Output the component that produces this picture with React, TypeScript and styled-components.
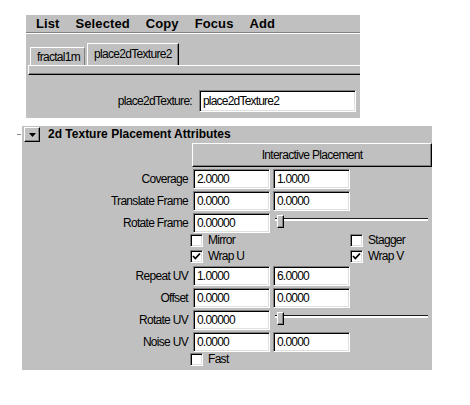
import React from 'react';
import styled, { createGlobalStyle } from 'styled-components';

const Global = createGlobalStyle`
  html, body { margin: 0; padding: 0; background: #ffffff; }
  body {
    font-family: "Liberation Sans", Arial, sans-serif;
    font-size: 12px;
    letter-spacing: -0.7px;
    color: #000;
  }
  * { box-sizing: border-box; }
`;

const Page = styled.div`
  width: 470px;
  height: 405px;
  padding: 15px 0 0 22px;
  display: flex;
  flex-direction: column;
  align-items: flex-start;
`;

const TopPanel = styled.div`
  margin-left: 4px;
  width: 334px;
  height: 103px;
  background: #c0c0c0;
  display: flex;
  flex-direction: column;
`;

const MenuBar = styled.div`
  height: 17px;
  display: flex;
  align-items: center;
  gap: 16px;
  padding-left: 10px;
  font-weight: bold;
  font-size: 13px;
  letter-spacing: 0.1px;
`;

const MenuItem = styled.span`
  line-height: 17px;
`;

const Separator = styled.div`
  height: 2px;
  border-top: 1px solid #808080;
  border-bottom: 1px solid #ffffff;
`;

const TabStrip = styled.div`
  height: 31px;
  display: flex;
  align-items: flex-end;
  padding-left: 4px;
`;

const Tab = styled.div<{ $active?: boolean }>`
  height: ${p => (p.$active ? 22 : 18)}px;
  margin-left: ${p => (p.$active ? 2 : 0)}px;
  padding: ${p => (p.$active ? '3px 6px 0 6px' : '2px 4px 0 6px')};
  border-top: 1px solid #ffffff;
  border-left: 1px solid #ffffff;
  border-right: 1px solid ${p => (p.$active ? '#000' : '#808080')};
  box-shadow: ${p => (p.$active ? 'inset -1px 0 0 #808080' : 'none')};
  line-height: 14px;
  white-space: nowrap;
`;

const TabFrame = styled.div`
  height: 10px;
  margin-left: 2px;
  border-top: 1px solid #ffffff;
  border-left: 1px solid #ffffff;
  border-bottom: 1px solid #000000;
  box-shadow: inset 0 -1px 0 #808080;
`;

const TabContent = styled.div`
  flex: 1;
  display: flex;
  justify-content: flex-end;
  align-items: flex-start;
  padding: 15px 4px 0 0;
  gap: 7px;
`;

const FieldLabel = styled.span`
  line-height: 22px;
  white-space: nowrap;
`;

const Field = styled.div<{ $w?: number; $h?: number }>`
  width: ${p => p.$w ?? 77}px;
  height: ${p => p.$h ?? 20}px;
  background: #ffffff;
  border-top: 1px solid #808080;
  border-left: 1px solid #808080;
  border-bottom: 1px solid #ffffff;
  border-right: 1px solid #ffffff;
  box-shadow: inset 1px 1px 0 #000000, inset -1px -1px 0 #dfdfdf;
  padding-left: 3px;
  letter-spacing: -0.8px;
  line-height: ${p => (p.$h ?? 20) - 2}px;
  white-space: nowrap;
  overflow: hidden;
`;

const AttrPanel = styled.div`
  margin-top: 8px;
  width: 410px;
  height: 244px;
  background: #c0c0c0;
  display: flex;
  flex-direction: column;
`;

const Header = styled.div`
  height: 17px;
  display: flex;
  align-items: center;
`;

const CollapseButton = styled.div`
  position: relative;
  margin-left: 2px;
  width: 16px;
  height: 15px;
  background: #c0c0c0;
  border-top: 1px solid #ffffff;
  border-left: 1px solid #ffffff;
  border-right: 1px solid #000000;
  border-bottom: 1px solid #000000;
  box-shadow: inset -1px -1px 0 #808080;
  display: flex;
  align-items: center;
  justify-content: center;
  &::before {
    content: '';
    position: absolute;
    left: -8px;
    top: 6px;
    width: 4px;
    height: 1px;
    background: #8a8a8a;
  }
`;

const HeaderTitle = styled.span`
  margin-left: 8px;
  font-weight: bold;
  font-size: 12px;
  letter-spacing: 0;
  line-height: 17px;
  white-space: nowrap;
`;

const Row = styled.div<{ $top?: number }>`
  display: flex;
  align-items: center;
  height: 20px;
  margin-top: ${p => p.$top ?? 2}px;
`;

const ButtonRow = styled.div`
  display: flex;
  height: 24px;
  padding-left: 170px;
`;

const PushButton = styled.div`
  flex: 1;
  background: #c0c0c0;
  border-top: 1px solid #ffffff;
  border-left: 1px solid #ffffff;
  border-right: 1px solid #000000;
  border-bottom: 1px solid #000000;
  box-shadow: inset -1px -1px 0 #808080;
  display: flex;
  align-items: center;
  justify-content: center;
  white-space: nowrap;
`;

const Label = styled.span`
  width: 166px;
  margin-right: 5px;
  text-align: right;
  line-height: 20px;
  white-space: nowrap;
`;

const Pair = styled.div`
  display: flex;
  gap: 3px;
`;

const Slider = styled.div`
  flex: 1;
  align-self: stretch;
  margin: 0 4px 0 5px;
  padding-top: 5px;
`;

const Track = styled.div`
  position: relative;
  height: 3px;
  border-top: 1px solid #1a1a1a;
  background: #ffffff;
`;

const Handle = styled.div`
  position: absolute;
  left: 2px;
  top: -4px;
  width: 7px;
  height: 13px;
  background: #c0c0c0;
  border-top: 1px solid #ffffff;
  border-left: 1px solid #ffffff;
  border-right: 1px solid #000000;
  border-bottom: 1px solid #000000;
  box-shadow: inset -1px -1px 0 #808080;
`;

const CheckRow = styled.div<{ $top?: number }>`
  display: flex;
  height: 16px;
  padding-left: 168px;
  padding-top: 1px;
  margin-top: ${p => p.$top ?? 0}px;
`;

const CheckItem = styled.div<{ $w?: number }>`
  display: flex;
  align-items: flex-start;
  width: ${p => (p.$w ? `${p.$w}px` : 'auto')};
`;

const Box = styled.div`
  width: 13px;
  height: 13px;
  background: #ffffff;
  border-top: 1px solid #808080;
  border-left: 1px solid #808080;
  border-bottom: 1px solid #ffffff;
  border-right: 1px solid #ffffff;
  box-shadow: inset 1px 1px 0 #000000, inset -1px -1px 0 #dfdfdf;
  display: flex;
  align-items: center;
  justify-content: center;
`;

const CheckText = styled.span`
  margin-left: 5px;
  line-height: 13px;
  white-space: nowrap;
`;

const Check = ({ label, checked, w }: { label: string; checked?: boolean; w?: number }) => (
  <CheckItem $w={w}>
    <Box>
      {checked && (
        <svg width="9" height="9" viewBox="0 0 9 9">
          <path d="M1 4 L3.3 6.5 L8 1.5" fill="none" stroke="#000" strokeWidth="1.8" />
        </svg>
      )}
    </Box>
    <CheckText>{label}</CheckText>
  </CheckItem>
);

const FieldRow = ({ label, a, b, top }: { label: string; a: string; b: string; top?: number }) => (
  <Row $top={top}>
    <Label>{label}</Label>
    <Pair>
      <Field>{a}</Field>
      <Field>{b}</Field>
    </Pair>
  </Row>
);

const SliderRow = ({ label, a }: { label: string; a: string }) => (
  <Row>
    <Label>{label}</Label>
    <Field>{a}</Field>
    <Slider>
      <Track>
        <Handle />
      </Track>
    </Slider>
  </Row>
);

export default function App() {
  return (
    <>
      <Global />
      <Page>
        <TopPanel>
          <MenuBar>
            <MenuItem>List</MenuItem>
            <MenuItem>Selected</MenuItem>
            <MenuItem>Copy</MenuItem>
            <MenuItem>Focus</MenuItem>
            <MenuItem>Add</MenuItem>
          </MenuBar>
          <Separator />
          <TabStrip>
            <Tab>fractal1m</Tab>
            <Tab $active>place2dTexture2</Tab>
          </TabStrip>
          <TabFrame />
          <TabContent>
            <FieldLabel>place2dTexture:</FieldLabel>
            <Field $w={157} $h={22}>place2dTexture2</Field>
          </TabContent>
        </TopPanel>
        <AttrPanel>
          <Header>
            <CollapseButton>
              <svg width="7" height="4" viewBox="0 0 7 4">
                <path d="M0 0 H7 L3.5 4 Z" fill="#000" />
              </svg>
            </CollapseButton>
            <HeaderTitle>2d Texture Placement Attributes</HeaderTitle>
          </Header>
          <ButtonRow>
            <PushButton>Interactive Placement</PushButton>
          </ButtonRow>
          <FieldRow label="Coverage" a="2.0000" b="1.0000" />
          <FieldRow label="Translate Frame" a="0.0000" b="0.0000" />
          <SliderRow label="Rotate Frame" a="0.00000" />
          <CheckRow>
            <Check label="Mirror" w={160} />
            <Check label="Stagger" />
          </CheckRow>
          <CheckRow>
            <Check label="Wrap U" checked w={160} />
            <Check label="Wrap V" checked />
          </CheckRow>
          <FieldRow label="Repeat UV" a="1.0000" b="6.0000" top={1} />
          <FieldRow label="Offset" a="0.0000" b="0.0000" />
          <SliderRow label="Rotate UV" a="0.00000" />
          <FieldRow label="Noise UV" a="0.0000" b="0.0000" />
          <CheckRow>
            <Check label="Fast" />
          </CheckRow>
        </AttrPanel>
      </Page>
    </>
  );
}
